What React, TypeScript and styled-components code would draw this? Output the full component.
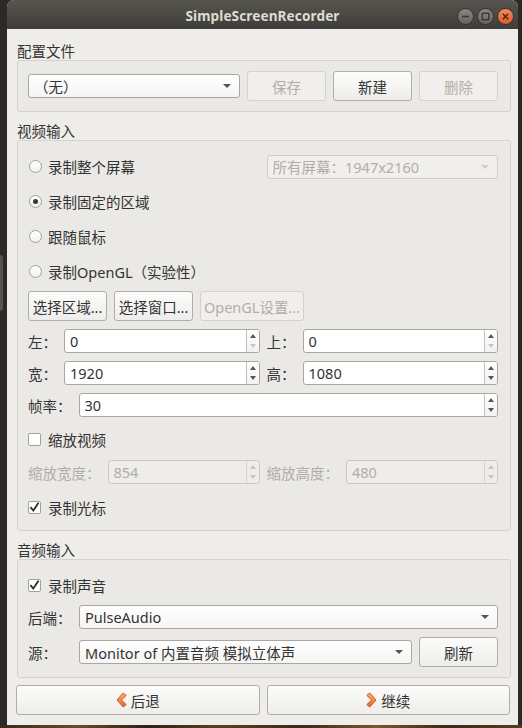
import React from "react";
import styled, { createGlobalStyle, css } from "styled-components";

const Global = createGlobalStyle`
  html, body { margin: 0; padding: 0; }
  body {
    width: 522px;
    height: 728px;
    overflow: hidden;
    background: #2c2a27;
    font-family: "Noto Sans", "Noto Sans CJK SC", sans-serif;
  }
`;

const TEXT = "#333333";
const DIS = "#b1aea9";

const Desktop = styled.div`
  width: 522px;
  height: 728px;
  display: flex;
  flex-direction: column;
  background: #2c2a27;
`;

const DesktopTop = styled.div`
  display: flex;
  height: 725px;
  flex: none;
`;

const LeftStrip = styled.div`
  width: 7px;
  flex: none;
  display: flex;
  flex-direction: column;
`;

const OtherWindowEdge = styled.div`
  margin-top: 255px;
  width: 3px;
  height: 56px;
  background: #56534d;
  border-radius: 0 3px 3px 0;
`;

const Wallpaper = styled.div`
  flex: 1;
  background: linear-gradient(
    90deg,
    #3b2a1c 0%,
    #6a4a2a 15%,
    #2e2218 28%,
    #5c3f22 42%,
    #3a2a1b 58%,
    #7a5530 72%,
    #3a2a1a 86%,
    #5a3d20 100%
  );
`;

const Window = styled.div`
  width: 511px;
  flex: none;
  display: flex;
  flex-direction: column;
  background: #efedea;
  border-radius: 7px 7px 0 0;
  overflow: hidden;
`;

const TitleBar = styled.div`
  height: 29px;
  flex: none;
  display: grid;
  grid-template-columns: 1fr auto 1fr;
  align-items: center;
  background: linear-gradient(#57554f, #3e3d39);
  padding-right: 4px;
`;

const TitleText = styled.div`
  grid-column: 2;
  color: #dfdbd2;
  font-weight: 700;
  font-size: 13.6px;
  letter-spacing: 0.1px;
  padding-left: 4px;
  padding-top: 1px;
`;

const TitleButtons = styled.div`
  grid-column: 3;
  justify-self: end;
  display: flex;
  gap: 3px;
  padding-top: 3px;
`;

const TitleButton = styled.div<{ $close?: boolean }>`
  width: 17px;
  height: 17px;
  box-sizing: border-box;
  border-radius: 50%;
  display: flex;
  align-items: center;
  justify-content: center;
  border: 1px solid #34332f;
  background: ${(p) =>
    p.$close
      ? "linear-gradient(#f58a5c, #e25a24)"
      : "linear-gradient(#8a8882, #65635e)"};
`;

const Content = styled.div`
  display: flex;
  flex-direction: column;
  padding: 13px 7px 10px 9px;
`;

const GroupTitle = styled.div`
  height: 18px;
  line-height: 18px;
  margin-left: 1px;
  font-size: 14.5px;
  color: ${TEXT};
`;

const GroupFrame = styled.div<{ $pt: number; $pb: number; $mb: number }>`
  margin: 0 0 ${(p) => p.$mb}px 1px;
  border: 1px solid #d5d2cd;
  border-radius: 3px;
  background: #ebe9e5;
  padding: ${(p) => p.$pt}px 12px ${(p) => p.$pb}px 10px;
  display: flex;
  flex-direction: column;
`;

const Row = styled.div<{ $h: number; $mt?: number }>`
  height: ${(p) => p.$h}px;
  margin-top: ${(p) => p.$mt ?? 0}px;
  display: flex;
  align-items: center;
  gap: 7px;
  font-size: 14.5px;
  color: ${TEXT};
`;

const TwoCol = styled.div<{ $h: number; $mt?: number }>`
  height: ${(p) => p.$h}px;
  margin-top: ${(p) => p.$mt ?? 0}px;
  display: grid;
  grid-template-columns: 1fr 1fr;
  column-gap: 7px;
  align-items: center;
  font-size: 14.5px;
  color: ${TEXT};
`;

const Field = styled.div`
  display: flex;
  align-items: center;
  gap: 7px;
  min-width: 0;
`;

const Label = styled.span<{ $disabled?: boolean; $w?: number }>`
  flex: none;
  white-space: nowrap;
  width: ${(p) => (p.$w ? `${p.$w}px` : "auto")};
  color: ${(p) => (p.$disabled ? DIS : TEXT)};
`;

const buttonBase = css<{ $disabled?: boolean }>`
  height: 30px;
  box-sizing: border-box;
  border-radius: 3px;
  display: flex;
  align-items: center;
  justify-content: center;
  gap: 4px;
  font-size: 14.5px;
  white-space: nowrap;
  ${(p) =>
    p.$disabled
      ? css`
          border: 1px solid #d4d1cc;
          background: #f1efed;
          color: ${DIS};
        `
      : css`
          border: 1px solid #b1aea9;
          background: linear-gradient(#fcfcfb, #eeedeb);
          color: ${TEXT};
        `}
`;

const Button = styled.div<{ $w?: number; $disabled?: boolean }>`
  ${buttonBase};
  flex: ${(p) => (p.$w ? "none" : "1")};
  width: ${(p) => (p.$w ? `${p.$w}px` : "auto")};
`;

const Combo = styled.div<{ $disabled?: boolean }>`
  flex: 1;
  min-width: 0;
  height: 24px;
  box-sizing: border-box;
  border-radius: 3px;
  display: flex;
  align-items: center;
  padding: 0 8px 0 5px;
  font-size: 14.5px;
  ${(p) =>
    p.$disabled
      ? css`
          border: 1px solid #d0cdc8;
          background: #f1efec;
          color: ${DIS};
        `
      : css`
          border: 1px solid #aaa7a2;
          background: linear-gradient(#fefefe, #f6f5f4);
          color: ${TEXT};
        `}
`;

const ComboText = styled.span`
  flex: 1;
  white-space: nowrap;
  overflow: hidden;
`;

const ComboArrow = styled.span<{ $disabled?: boolean }>`
  width: 0;
  height: 0;
  border-left: 4px solid transparent;
  border-right: 4px solid transparent;
  border-top: 4px solid ${(p) => (p.$disabled ? "#d2cfca" : "#555553")};
`;

const Spin = styled.div<{ $disabled?: boolean }>`
  flex: 1;
  min-width: 0;
  height: 24px;
  box-sizing: border-box;
  border-radius: 3px;
  display: flex;
  font-size: 14.5px;
  overflow: hidden;
  ${(p) =>
    p.$disabled
      ? css`
          border: 1px solid #ccc9c4;
          background: #efedea;
          color: ${DIS};
        `
      : css`
          border: 1px solid #a9a6a1;
          background: #ffffff;
          color: ${TEXT};
        `}
`;

const SpinValue = styled.span`
  flex: 1;
  display: flex;
  align-items: center;
  padding-left: 5px;
`;

const SpinArrows = styled.div<{ $disabled?: boolean }>`
  width: 12px;
  flex: none;
  border-left: 1px solid ${(p) => (p.$disabled ? "#d6d3ce" : "#c4c1bc")};
  background: ${(p) => (p.$disabled ? "#efedea" : "linear-gradient(#ffffff, #f3f2f0)")};
  display: flex;
  flex-direction: column;
`;

const SpinHalf = styled.div`
  flex: 1;
  display: flex;
  align-items: center;
  justify-content: center;
`;

const Tri = styled.span<{ $down?: boolean; $dim?: boolean }>`
  width: 0;
  height: 0;
  border-left: 3.5px solid transparent;
  border-right: 3.5px solid transparent;
  ${(p) =>
    p.$down
      ? css`
          border-top: 4px solid ${p.$dim ? "#c9c6c1" : "#555553"};
          margin-top: -1px;
        `
      : css`
          border-bottom: 4px solid ${p.$dim ? "#c9c6c1" : "#555553"};
          margin-top: 1px;
        `}
`;

const RadioCircle = styled.span<{ $on?: boolean }>`
  width: 13px;
  height: 13px;
  margin-left: 1px;
  margin-right: -1px;
  box-sizing: border-box;
  border-radius: 50%;
  border: 1px solid #a3a09b;
  background: linear-gradient(#ffffff, #f1f0ee);
  display: flex;
  align-items: center;
  justify-content: center;
  flex: none;
  &::after {
    content: "";
    display: ${(p) => (p.$on ? "block" : "none")};
    width: 5px;
    height: 5px;
    border-radius: 50%;
    background: #3a3a3a;
  }
`;

const CheckBox = styled.span`
  width: 13px;
  height: 13px;
  box-sizing: border-box;
  border: 1px solid #a3a09b;
  border-radius: 2px;
  background: #ffffff;
  display: flex;
  align-items: center;
  justify-content: center;
  flex: none;
`;

const BottomRow = styled.div`
  display: flex;
  gap: 7px;
  margin: 7px 1px 0 0;
`;

const Radio = ({ on, children }: { on?: boolean; children: React.ReactNode }) => (
  <>
    <RadioCircle $on={on} />
    <span>{children}</span>
  </>
);

const Check = ({ on }: { on?: boolean }) => (
  <CheckBox>
    {on && (
      <svg width="11" height="11" viewBox="0 0 11 11">
        <path d="M2 5.8 L4.3 8.6 L9 1.6" fill="none" stroke="#2b2b2b" strokeWidth="1.8" strokeLinecap="square" />
      </svg>
    )}
  </CheckBox>
);

const SpinBox = ({ value, disabled, atMin }: { value: string; disabled?: boolean; atMin?: boolean }) => (
  <Spin $disabled={disabled}>
    <SpinValue>{value}</SpinValue>
    <SpinArrows $disabled={disabled}>
      <SpinHalf>
        <Tri $dim={disabled} />
      </SpinHalf>
      <SpinHalf>
        <Tri $down $dim={disabled || atMin} />
      </SpinHalf>
    </SpinArrows>
  </Spin>
);

const ComboBox = ({ text, disabled }: { text: string; disabled?: boolean }) => (
  <Combo $disabled={disabled}>
    <ComboText>{text}</ComboText>
    <ComboArrow $disabled={disabled} />
  </Combo>
);

const Chevron = ({ left }: { left?: boolean }) => (
  <svg width="11" height="16" viewBox="0 0 11 16" style={{ transform: left ? "none" : "scaleX(-1)" }}>
    <defs>
      <linearGradient id={left ? "chl" : "chr"} x1="0" y1="0" x2="0" y2="1">
        <stop offset="0" stopColor="#f9b27a" />
        <stop offset="1" stopColor="#e8641f" />
      </linearGradient>
    </defs>
    <path
      d="M7.2 1 L10.2 3.4 L5.4 8 L10.2 12.6 L7.2 15 L1 8 Z"
      fill={`url(#${left ? "chl" : "chr"})`}
      stroke="#d2561a"
      strokeWidth="1"
      strokeLinejoin="round"
    />
  </svg>
);

export default function App() {
  return (
    <>
      <Global />
      <Desktop>
        <DesktopTop>
          <LeftStrip>
            <OtherWindowEdge />
          </LeftStrip>
          <Window>
            <TitleBar>
              <TitleText>SimpleScreenRecorder</TitleText>
              <TitleButtons>
                <TitleButton>
                  <svg width="9" height="9" viewBox="0 0 9 9">
                    <path d="M1 4.5 H8" stroke="#3a3935" strokeWidth="1.6" />
                  </svg>
                </TitleButton>
                <TitleButton>
                  <svg width="9" height="9" viewBox="0 0 9 9">
                    <rect x="1.3" y="1.3" width="6.4" height="6.4" fill="none" stroke="#3a3935" strokeWidth="1.4" />
                  </svg>
                </TitleButton>
                <TitleButton $close>
                  <svg width="9" height="9" viewBox="0 0 9 9">
                    <path d="M1.8 1.8 L7.2 7.2 M7.2 1.8 L1.8 7.2" stroke="#3a2a22" strokeWidth="1.5" />
                  </svg>
                </TitleButton>
              </TitleButtons>
            </TitleBar>

            <Content>
              <GroupTitle>配置文件</GroupTitle>
              <GroupFrame $pt={10} $pb={10} $mb={10}>
                <Row $h={30}>
                  <ComboBox text="（无）" />
                  <Button $w={79} $disabled>保存</Button>
                  <Button $w={79}>新建</Button>
                  <Button $w={79} $disabled>删除</Button>
                </Row>
              </GroupFrame>

              <GroupTitle>视频输入</GroupTitle>
              <GroupFrame $pt={8} $pb={11} $mb={10}>
                <TwoCol $h={35}>
                  <Field>
                    <Radio>录制整个屏幕</Radio>
                  </Field>
                  <ComboBox text="所有屏幕：1947x2160" disabled />
                </TwoCol>
                <Row $h={35}>
                  <Radio on>录制固定的区域</Radio>
                </Row>
                <Row $h={35}>
                  <Radio>跟随鼠标</Radio>
                </Row>
                <Row $h={35}>
                  <Radio>录制OpenGL（实验性）</Radio>
                </Row>
                <Row $h={30} $mt={2}>
                  <Button $w={79}>选择区域...</Button>
                  <Button $w={79}>选择窗口...</Button>
                  <Button $w={104} $disabled>OpenGL设置...</Button>
                </Row>
                <TwoCol $h={24} $mt={8}>
                  <Field>
                    <Label>左：</Label>
                    <SpinBox value="0" atMin />
                  </Field>
                  <Field>
                    <Label>上：</Label>
                    <SpinBox value="0" atMin />
                  </Field>
                </TwoCol>
                <TwoCol $h={24} $mt={8}>
                  <Field>
                    <Label>宽：</Label>
                    <SpinBox value="1920" />
                  </Field>
                  <Field>
                    <Label>高：</Label>
                    <SpinBox value="1080" />
                  </Field>
                </TwoCol>
                <Row $h={24} $mt={8}>
                  <Label>帧率：</Label>
                  <SpinBox value="30" />
                </Row>
                <Row $h={24} $mt={10}>
                  <Check />
                  <span>缩放视频</span>
                </Row>
                <TwoCol $h={24} $mt={9}>
                  <Field>
                    <Label $disabled>缩放宽度：</Label>
                    <SpinBox value="854" disabled />
                  </Field>
                  <Field>
                    <Label $disabled>缩放高度：</Label>
                    <SpinBox value="480" disabled />
                  </Field>
                </TwoCol>
                <Row $h={24} $mt={11}>
                  <Check on />
                  <span>录制光标</span>
                </Row>
              </GroupFrame>

              <GroupTitle>音频输入</GroupTitle>
              <GroupFrame $pt={13} $pb={10} $mb={0}>
                <Row $h={24}>
                  <Check on />
                  <span>录制声音</span>
                </Row>
                <Row $h={24} $mt={8}>
                  <Label $w={44}>后端：</Label>
                  <ComboBox text="PulseAudio" />
                </Row>
                <Row $h={30} $mt={8}>
                  <Label $w={44}>源：</Label>
                  <ComboBox text="Monitor of 内置音频 模拟立体声" />
                  <Button $w={79}>刷新</Button>
                </Row>
              </GroupFrame>

              <BottomRow>
                <Button>
                  <Chevron left />
                  <span>后退</span>
                </Button>
                <Button>
                  <Chevron />
                  <span>继续</span>
                </Button>
              </BottomRow>
            </Content>
          </Window>
        </DesktopTop>
        <Wallpaper />
      </Desktop>
    </>
  );
}
